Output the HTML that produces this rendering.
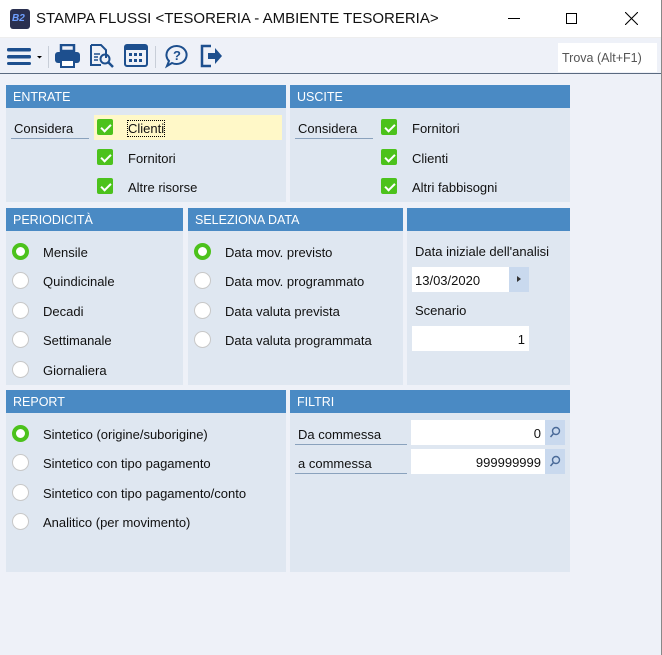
<!DOCTYPE html>
<html><head><meta charset="utf-8"><style>
*{box-sizing:border-box;margin:0;padding:0}
body{width:662px;height:655px;overflow:hidden;background:#eef1f8;font-family:"Liberation Sans",Tahoma,sans-serif;font-size:13px;color:#111;position:relative}
.a{position:absolute}
.title{left:0;top:0;width:662px;height:38px;background:#fff;border-bottom:1px solid #eee}
.tb{left:0;top:38px;width:662px;height:36px;background:#eef1f8;border-bottom:1px solid #5a6a80}
.p{position:absolute;background:#dfe7f1}
.h{position:absolute;left:0;top:0;right:0;height:23px;background:#4a8ac4;color:#fff;font-size:12.5px;padding:5px 0 0 7px}
.cb{position:absolute;width:16px;height:16px;background:#4cc21c;border-radius:2px}
.cb:after{content:"";position:absolute;left:6px;top:3px;width:4px;height:8px;border:solid #fff;border-width:0 2.5px 2.5px 0;transform:rotate(45deg)}
.r{position:absolute;width:17px;height:17px;border-radius:50%;background:#fff;border:1px solid #c8c8c8}
.r.on{border:4px solid #4cc21c}
.lbl{position:absolute;white-space:nowrap}
.ul{position:absolute;border-bottom:1px solid #8aa2bd}
.in{position:absolute;background:#fff;text-align:right;padding:6px 4px 0 0}
.bt{position:absolute;background:#c9d9ee}
.vsep{position:absolute;top:46px;width:1px;height:22px;background:#c8ced8}
</style></head><body>
<div style="position:absolute;right:0;top:0;width:1px;height:655px;background:#888;z-index:5"></div>
<div class="a title">
 <div class="a" style="left:10px;top:9px;width:20px;height:20px;background:#2a3050;border-radius:3px;color:#6fa0ff;font-size:10px;font-weight:bold;padding:4px 0 0 2px;font-style:italic">B2</div>
 <div class="lbl" style="left:36px;top:10px;font-size:15px">STAMPA FLUSSI &lt;TESORERIA - AMBIENTE TESORERIA&gt;</div>
 <div class="a" style="left:508px;top:18px;width:12px;height:1px;background:#000"></div>
 <div class="a" style="left:566px;top:13px;width:11px;height:11px;border:1px solid #000"></div>
 <svg class="a" style="left:625px;top:12px" width="13" height="13"><path d="M0 0L13 13M13 0L0 13" stroke="#000" stroke-width="1.1"/></svg>
</div>
<div class="a tb">
 <svg class="a" style="left:7px;top:9px" width="38" height="18"><rect x="0" y="1" width="24" height="3.5" rx="1.5" fill="#1d4f8e"/><rect x="0" y="8" width="24" height="3.5" rx="1.5" fill="#1d4f8e"/><rect x="0" y="15" width="24" height="3" rx="1.5" fill="#1d4f8e"/><path d="M30 9l5 0l-2.5 2.5z" fill="#000"/></svg>
 <svg class="a" style="left:55px;top:6px" width="26" height="24"><rect x="6" y="1" width="13" height="6" fill="none" stroke="#1d4f8e" stroke-width="2.5"/><rect x="0" y="8" width="25" height="11" rx="3" fill="#1d4f8e"/><rect x="6" y="16" width="13" height="7" fill="#fff" stroke="#1d4f8e" stroke-width="2"/></svg>
 <svg class="a" style="left:89px;top:5px" width="26" height="26"><path d="M2 2h10l5 5v8M2 2v20h10" fill="none" stroke="#1d4f8e" stroke-width="2"/><path d="M5 11h6M5 14h4M5 17h4" stroke="#1d4f8e" stroke-width="1.5"/><circle cx="16" cy="16" r="4.5" fill="none" stroke="#1d4f8e" stroke-width="2"/><path d="M19 19l5 5" stroke="#1d4f8e" stroke-width="2.5"/></svg>
 <svg class="a" style="left:124px;top:6px" width="24" height="24"><rect x="1" y="1" width="22" height="21" rx="2" fill="none" stroke="#1d4f8e" stroke-width="2"/><rect x="1" y="1" width="22" height="5" fill="#1d4f8e"/><g fill="#1d4f8e"><rect x="5" y="9" width="3" height="3"/><rect x="10" y="9" width="3" height="3"/><rect x="15" y="9" width="3" height="3"/><rect x="5" y="15" width="3" height="3"/><rect x="10" y="15" width="3" height="3"/><rect x="15" y="15" width="3" height="3"/></g></svg>
 <svg class="a" style="left:165px;top:6px" width="25" height="25"><path d="M12 2a10 9 0 1 1-5 17l-5 3 2-5a10 9 0 0 1 8-15z" fill="none" stroke="#1d4f8e" stroke-width="2"/><text x="8" y="16" font-size="13" font-weight="bold" fill="#1d4f8e" font-family="Liberation Sans">?</text></svg>
 <svg class="a" style="left:200px;top:6px" width="24" height="24"><path d="M11 2H2v20h9" fill="none" stroke="#1d4f8e" stroke-width="2.5"/><path d="M8 9h7V4l7 8-7 8v-5H8z" fill="#1d4f8e"/></svg>
 <div class="vsep" style="left:48px;top:8px"></div><div class="vsep" style="left:155px;top:8px"></div>
 <div class="a" style="left:558px;top:5px;width:99px;height:29px;background:#fff;color:#555;padding:8px 0 0 4px;font-size:12.5px">Trova (Alt+F1)</div>
</div>

<div class="p" style="left:6px;top:85px;width:280px;height:117px"><div class="h">ENTRATE</div>
 <div class="lbl" style="left:8px;top:36px">Considera</div><div class="ul" style="left:5px;top:38px;width:78px;height:16px"></div>
 <div class="a" style="left:88px;top:30px;width:188px;height:25px;background:#fff8c8"></div>
 <div class="cb" style="left:91px;top:34px"></div><div class="lbl" style="left:122px;top:36px;outline:1px dotted #000">Clienti</div>
 <div class="cb" style="left:91px;top:64px"></div><div class="lbl" style="left:122px;top:66px">Fornitori</div>
 <div class="cb" style="left:91px;top:93px"></div><div class="lbl" style="left:122px;top:95px">Altre risorse</div>
</div>
<div class="p" style="left:290px;top:85px;width:280px;height:117px"><div class="h">USCITE</div>
 <div class="lbl" style="left:8px;top:36px">Considera</div><div class="ul" style="left:5px;top:38px;width:78px;height:16px"></div>
 <div class="cb" style="left:91px;top:34px"></div><div class="lbl" style="left:122px;top:36px">Fornitori</div>
 <div class="cb" style="left:91px;top:64px"></div><div class="lbl" style="left:122px;top:66px">Clienti</div>
 <div class="cb" style="left:91px;top:93px"></div><div class="lbl" style="left:122px;top:95px">Altri fabbisogni</div>
</div>

<div class="p" style="left:6px;top:208px;width:177px;height:177px"><div class="h">PERIODICITÀ</div>
 <div class="r on" style="left:6px;top:35px"></div><div class="lbl" style="left:37px;top:37px">Mensile</div>
 <div class="r" style="left:6px;top:64px"></div><div class="lbl" style="left:37px;top:66px">Quindicinale</div>
 <div class="r" style="left:6px;top:94px"></div><div class="lbl" style="left:37px;top:96px">Decadi</div>
 <div class="r" style="left:6px;top:123px"></div><div class="lbl" style="left:37px;top:125px">Settimanale</div>
 <div class="r" style="left:6px;top:153px"></div><div class="lbl" style="left:37px;top:155px">Giornaliera</div>
</div>
<div class="p" style="left:188px;top:208px;width:215px;height:177px"><div class="h">SELEZIONA DATA</div>
 <div class="r on" style="left:6px;top:35px"></div><div class="lbl" style="left:37px;top:37px">Data mov. previsto</div>
 <div class="r" style="left:6px;top:64px"></div><div class="lbl" style="left:37px;top:66px">Data mov. programmato</div>
 <div class="r" style="left:6px;top:94px"></div><div class="lbl" style="left:37px;top:96px">Data valuta prevista</div>
 <div class="r" style="left:6px;top:123px"></div><div class="lbl" style="left:37px;top:125px">Data valuta programmata</div>
</div>
<div class="p" style="left:407px;top:208px;width:163px;height:177px"><div class="h"></div>
 <div class="lbl" style="left:8px;top:36px">Data iniziale dell'analisi</div>
 <div class="in" style="left:5px;top:59px;width:97px;height:25px;text-align:left;padding-left:3px">13/03/2020</div>
 <div class="bt" style="left:102px;top:59px;width:20px;height:25px"><div class="a" style="left:8px;top:9px;border-left:4px solid #333;border-top:3px solid transparent;border-bottom:3px solid transparent"></div></div>
 <div class="lbl" style="left:8px;top:95px">Scenario</div>
 <div class="in" style="left:5px;top:118px;width:117px;height:25px">1</div>
</div>

<div class="p" style="left:6px;top:390px;width:280px;height:182px"><div class="h">REPORT</div>
 <div class="r on" style="left:6px;top:35px"></div><div class="lbl" style="left:37px;top:37px">Sintetico (origine/suborigine)</div>
 <div class="r" style="left:6px;top:64px"></div><div class="lbl" style="left:37px;top:66px">Sintetico con tipo pagamento</div>
 <div class="r" style="left:6px;top:94px"></div><div class="lbl" style="left:37px;top:96px">Sintetico con tipo pagamento/conto</div>
 <div class="r" style="left:6px;top:123px"></div><div class="lbl" style="left:37px;top:125px">Analitico (per movimento)</div>
</div>
<div class="p" style="left:290px;top:390px;width:280px;height:182px"><div class="h">FILTRI</div>
 <div class="lbl" style="left:8px;top:37px">Da commessa</div><div class="ul" style="left:5px;top:39px;width:112px;height:16px"></div>
 <div class="in" style="left:121px;top:30px;width:134px;height:25px">0</div>
 <div class="bt" style="left:255px;top:30px;width:20px;height:25px"><svg width="20" height="25"><circle cx="11" cy="11" r="3.5" fill="none" stroke="#4a6a98" stroke-width="1.4"/><path d="M8.5 13.5l-3 3.5" stroke="#4a6a98" stroke-width="1.5"/></svg></div>
 <div class="lbl" style="left:8px;top:66px">a commessa</div><div class="ul" style="left:5px;top:68px;width:112px;height:16px"></div>
 <div class="in" style="left:121px;top:59px;width:134px;height:25px">999999999</div>
 <div class="bt" style="left:255px;top:59px;width:20px;height:25px"><svg width="20" height="25"><circle cx="11" cy="11" r="3.5" fill="none" stroke="#4a6a98" stroke-width="1.4"/><path d="M8.5 13.5l-3 3.5" stroke="#4a6a98" stroke-width="1.5"/></svg></div>
</div>
</body></html>
